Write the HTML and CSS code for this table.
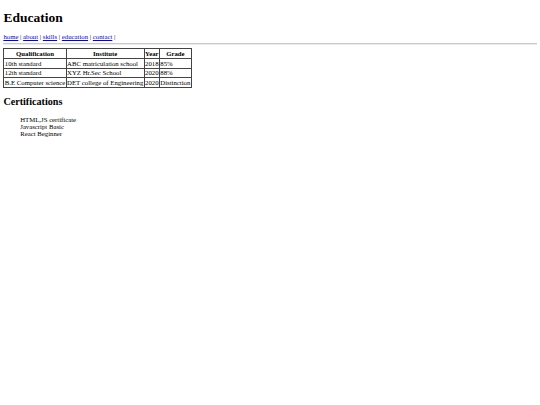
FILE: index.html
```html
<!DOCTYPE html>
<html>
<head>
<meta charset="utf-8">
<link rel="stylesheet" href="styles.css">
</head>
<body>
<h1 class="title">Education</h1>
<nav class="nav"><a href="#">home</a> | <a href="#">about</a> | <a href="#">skills</a> | <a href="#">education</a> | <a href="#">contact</a> |</nav>
<hr class="rule">
<table class="edu">
<tr><th>Qualification</th><th>Institute</th><th>Year</th><th>Grade</th></tr>
<tr><td>10th standard</td><td>ABC matriculation school</td><td>2018</td><td>85%</td></tr>
<tr><td>12th standard</td><td>XYZ Hr.Sec School</td><td>2020</td><td>88%</td></tr>
<tr><td>B.E Computer science</td><td>DET college of Engineering</td><td>2020</td><td>Distinction</td></tr>
</table>
<h2 class="sub">Certifications</h2>
<ul class="certs">
<li>HTML,JS certificate</li>
<li>Javascript Basic</li>
<li>React Beginner</li>
</ul>
</body>
</html>
```
FILE: styles.css
```css
body {
  font-family: "Liberation Serif", "Times New Roman", serif;
  font-size: 6.75px;
  margin: 3.375px;
  color: #000;
}
.title {
  font-size: 2em;
  margin: 7px 0;
}
.sub {
  font-size: 1.5em;
  margin: 0.83em 0;
}
.nav a {
  color: #0000ee;
}
.rule {
  margin: 3px 0;
  border: 0;
  border-top: 1px solid #c8c8c8;
  border-bottom: 1px solid #ececec;
  height: 0;
}
.edu {
  border-collapse: collapse;
  border: 1px solid #222;
}
.edu th,
.edu td {
  border: 1px solid #444;
  padding: 0.8px 0.4px;
}
.certs {
  list-style: none;
  margin: 1em 0;
  padding-left: 2.5em;
}
```
